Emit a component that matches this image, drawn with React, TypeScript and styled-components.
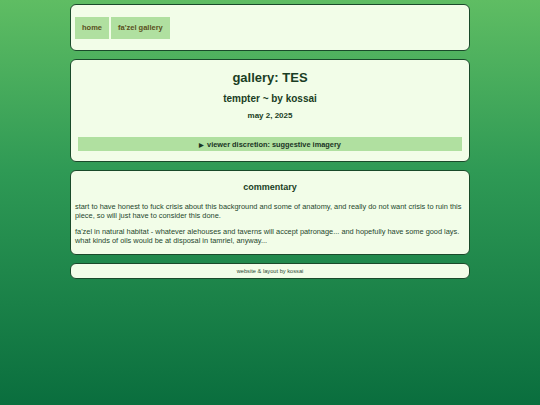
import React from "react";
import styled, { createGlobalStyle } from "styled-components";

const GlobalStyle = createGlobalStyle`
  html, body {
    margin: 0;
    padding: 0;
    min-height: 100%;
  }
  body {
    background: linear-gradient(#5fbd63, #2f9a55 42%, #0a6e3e);
    min-height: 100vh;
    font-family: "Liberation Sans", Arial, sans-serif;
    color: #1c4a2c;
  }
`;

const Page = styled.div`
  width: 400px;
  margin: 0 auto;
  padding-top: 4px;
  display: flex;
  flex-direction: column;
  gap: 8px;
`;

const Panel = styled.section`
  background: #f2fde8;
  border: 1.5px solid #1a4a2a;
  border-radius: 6px;
  box-sizing: border-box;
`;

const NavPanel = styled(Panel)`
  height: 47px;
  display: flex;
  align-items: center;
  padding: 0 4px;
  gap: 2px;
`;

const NavButton = styled.a`
  height: 22px;
  padding: 0 7px;
  display: flex;
  align-items: center;
  background: #b0e0a0;
  color: #5a4f1c;
  font-size: 7.5px;
  font-weight: bold;
  text-decoration: none;
`;

const HeaderPanel = styled(Panel)`
  padding: 10px 7px 10px;
  display: flex;
  flex-direction: column;
  align-items: center;
`;

const Title = styled.h1`
  margin: 0;
  font-size: 13px;
  line-height: 16px;
  color: #1a3d24;
`;

const Subtitle = styled.h2`
  margin: 6px 0 0;
  font-size: 10px;
  line-height: 13px;
  color: #1a3d24;
`;

const DateLine = styled.div`
  margin-top: 6px;
  font-size: 8px;
  line-height: 10px;
  font-weight: bold;
  color: #1a3d24;
`;

const Disclosure = styled.div`
  margin-top: 16px;
  align-self: stretch;
  height: 14px;
  background: #b0e0a0;
  display: flex;
  align-items: center;
  justify-content: center;
  gap: 3px;
  font-size: 7.4px;
  font-weight: bold;
  color: #1a3424;
`;

const Arrow = styled.span`
  font-size: 6px;
`;

const CommentPanel = styled(Panel)`
  padding: 11px 4px 8.5px;
`;

const SectionTitle = styled.h3`
  margin: 0 0 9px;
  text-align: center;
  font-size: 9px;
  line-height: 11px;
  color: #1a3d24;
`;

const Paragraph = styled.p`
  margin: 0 0 7px;
  font-size: 7.4px;
  line-height: 9px;
  color: #1e472c;
  &:last-child {
    margin-bottom: 0;
  }
`;

const Footer = styled(Panel)`
  height: 16px;
  display: flex;
  align-items: center;
  justify-content: center;
  font-size: 5.7px;
  color: #2a4a34;
`;

const App: React.FC = () => (
  <>
    <GlobalStyle />
    <Page>
      <NavPanel>
        <NavButton href="#">home</NavButton>
        <NavButton href="#">fa'zel gallery</NavButton>
      </NavPanel>
      <HeaderPanel>
        <Title>gallery: TES</Title>
        <Subtitle>tempter ~ by kossai</Subtitle>
        <DateLine>may 2, 2025</DateLine>
        <Disclosure>
          <Arrow>▶</Arrow>
          viewer discretion: suggestive imagery
        </Disclosure>
      </HeaderPanel>
      <CommentPanel>
        <SectionTitle>commentary</SectionTitle>
        <Paragraph>
          start to have honest to fuck crisis about this background and some of anatomy, and really do not want
          crisis to ruin this piece, so will just have to consider this done.
        </Paragraph>
        <Paragraph>
          fa'zel in natural habitat - whatever alehouses and taverns will accept patronage... and hopefully have
          some good lays. what kinds of oils would be at disposal in tamriel, anyway...
        </Paragraph>
      </CommentPanel>
      <Footer>website &amp; layout by kossai</Footer>
    </Page>
  </>
);

export default App;
